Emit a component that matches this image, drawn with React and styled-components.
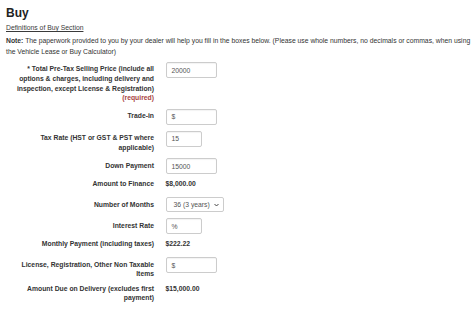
import React from "react";
import styled, { createGlobalStyle } from "styled-components";

const Global = createGlobalStyle`
  html, body { margin: 0; padding: 0; background: #fff; }
  body { font-family: "Liberation Sans", Arial, sans-serif; color: #333; font-size: 6.8px; line-height: 9.3px; }
`;

const Page = styled.div`
  padding: 7px 6px 0 6px;
  width: 462px;
`;

const Title = styled.h2`
  margin: 0;
  font-size: 12px;
  line-height: 13px;
  font-weight: bold;
  color: #222;
`;

const DefLink = styled.a`
  display: block;
  width: fit-content;
  margin-top: 3px;
  font-size: 6.8px;
  line-height: 9.3px;
  color: #3a3a3a;
  text-decoration: underline;
`;

const Note = styled.p`
  margin: 4.2px 0 0 0;
  width: 466px;
  font-size: 6.8px;
  line-height: 10.2px;
  color: #333;
  b { font-weight: bold; }
`;

const Form = styled.div`
  margin-top: 5.3px;
  display: flex;
  flex-direction: column;
  gap: 6px;
`;

const Row = styled.div`
  display: grid;
  grid-template-columns: 146px 1fr;
  column-gap: 11.5px;
  padding-left: 2px;
  align-items: start;
  margin-top: ${(p) => (p.$static ? "-1px" : "0")};
  min-height: ${(p) => (p.$static ? "12px" : "0")};
`;

const Label = styled.div`
  text-align: right;
  font-size: 6.8px;
  line-height: 9.6px;
  font-weight: bold;
  color: #333;
  padding-top: ${(p) => (p.$static ? "0" : "2.3px")};
`;

const Required = styled.span`
  color: #a94442;
`;

const Input = styled.div`
  box-sizing: border-box;
  width: ${(p) => p.$w}px;
  height: 16px;
  border: 1px solid #ccc;
  border-radius: 2px;
  padding: 0 5px;
  display: flex;
  align-items: center;
  font-size: 6.8px;
  color: #555;
  background: #fff;
  box-shadow: inset 0 1px 1px rgba(0, 0, 0, 0.05);
`;

const Select = styled.div`
  position: relative;
  box-sizing: border-box;
  width: 58px;
  height: 15px;
  border: 1px solid #ccc;
  border-radius: 2px;
  padding: 0 0 0 7px;
  display: flex;
  align-items: center;
  font-size: 6.8px;
  color: #555;
  background: #fff;
`;

const Chevron = styled.svg`
  position: absolute;
  right: 4px;
  top: 50%;
  transform: translateY(-50%);
  width: 5px;
  height: 4px;
`;

const Value = styled.div`
  font-size: 6.8px;
  line-height: 9.6px;
  font-weight: bold;
  color: #333;
`;

const rows = [
  {
    label: (
      <>
        * Total Pre-Tax Selling Price (include all options &amp; charges, including delivery and
        inspection, except License &amp; Registration) <Required>(required)</Required>
      </>
    ),
    input: "20000",
    w: 51,
  },
  { label: "Trade-in", input: "$", w: 51 },
  { label: "Tax Rate (HST or GST & PST where applicable)", input: "15", w: 36 },
  { label: "Down Payment", input: "15000", w: 51 },
  { label: "Amount to Finance", value: "$8,000.00" },
  { label: "Number of Months", select: "36 (3 years)" },
  { label: "Interest Rate", input: "%", w: 36 },
  { label: "Monthly Payment (including taxes)", value: "$222.22" },
  { label: "License, Registration, Other Non Taxable Items", input: "$", w: 51 },
  { label: "Amount Due on Delivery (excludes first payment)", value: "$15,000.00" },
];

export default function App() {
  return (
    <>
      <Global />
      <Page>
        <Title>Buy</Title>
        <DefLink href="#">Definitions of Buy Section</DefLink>
        <Note>
          <b>Note:</b> The paperwork provided to you by your dealer will help you fill in the boxes
          below. (Please use whole numbers, no decimals or commas, when using the Vehicle Lease or
          Buy Calculator)
        </Note>
        <Form>
          {rows.map((r, i) => {
            const isStatic = r.value !== undefined;
            return (
              <Row key={i} $static={isStatic}>
                <Label $static={isStatic}>{r.label}</Label>
                {isStatic ? (
                  <Value>{r.value}</Value>
                ) : r.select ? (
                  <Select>
                    {r.select}
                    <Chevron viewBox="0 0 10 8">
                      <path d="M1 2 L5 6 L9 2" fill="none" stroke="#333" strokeWidth="1.8" />
                    </Chevron>
                  </Select>
                ) : (
                  <Input $w={r.w}>{r.input}</Input>
                )}
              </Row>
            );
          })}
        </Form>
      </Page>
    </>
  );
}
